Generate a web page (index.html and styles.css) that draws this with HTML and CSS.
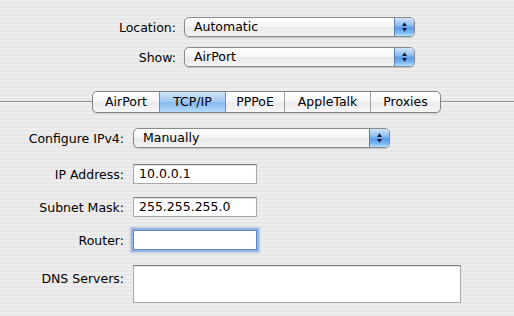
FILE: index.html
```html
<!DOCTYPE html>
<html>
<head>
<meta charset="utf-8">
<link rel="stylesheet" href="styles.css">
</head>
<body>
<div class="window">
  <div class="top">
    <label class="lbl">Location:</label>
    <div class="popup wide"><span class="val">Automatic</span><span class="arrows"><svg width="20" height="18" viewBox="0 0 20 18"><path d="M10 4 L12.6 8 H7.4 Z M10 14 L12.6 10 H7.4 Z" fill="#0b1a3a"/></svg></span></div>
    <label class="lbl">Show:</label>
    <div class="popup wide"><span class="val">AirPort</span><span class="arrows"><svg width="20" height="18" viewBox="0 0 20 18"><path d="M10 4 L12.6 8 H7.4 Z M10 14 L12.6 10 H7.4 Z" fill="#0b1a3a"/></svg></span></div>
  </div>

  <div class="tabrow">
    <div class="seg">
      <span class="tab t1">AirPort</span>
      <span class="tab t2 sel">TCP/IP</span>
      <span class="tab t3">PPPoE</span>
      <span class="tab t4">AppleTalk</span>
      <span class="tab t5">Proxies</span>
    </div>
  </div>

  <div class="form">
    <label class="lbl">Configure IPv4:</label>
    <div class="popup cfg"><span class="val">Manually</span><span class="arrows"><svg width="20" height="18" viewBox="0 0 20 18"><path d="M10 4 L12.6 8 H7.4 Z M10 14 L12.6 10 H7.4 Z" fill="#0b1a3a"/></svg></span></div>

    <label class="lbl r-ip">IP Address:</label>
    <div class="field r-ip">10.0.0.1</div>

    <label class="lbl">Subnet Mask:</label>
    <div class="field">255.255.255.0</div>

    <label class="lbl">Router:</label>
    <div class="field focus"></div>

    <label class="lbl r-dns top-al">DNS Servers:</label>
    <div class="box r-dns"></div>
  </div>
</div>
</body>
</html>
```

FILE: styles.css
```css
* { box-sizing: border-box; }
html, body {
  margin: 0;
  padding: 0;
  width: 514px;
  height: 316px;
  overflow: hidden;
}
body {
  font-family: "DejaVu Sans", "Noto Sans", sans-serif;
  font-size: 12.5px;
  color: #000;
  background: repeating-linear-gradient(to bottom, #ededed 0px, #ededed 2px, #e7e7e7 2px, #e7e7e7 4px);
}
.window {
  height: 316px;
}
.top {
  padding-top: 17px;
  display: grid;
  grid-template-columns: 176px 231px;
  column-gap: 8px;
  row-gap: 10px;
  align-items: center;
}
.lbl {
  text-align: right;
  white-space: nowrap;
}
.popup {
  height: 20px;
  border: 1px solid #8a8a8a;
  border-radius: 5px;
  background: linear-gradient(to bottom, #ffffff 0%, #f6f6f6 45%, #e9e9e9 55%, #f4f4f4 100%);
  box-shadow: 0 1px 1px rgba(0,0,0,0.18);
  display: flex;
  overflow: hidden;
}
.popup .val {
  flex: 1;
  padding-left: 9px;
  line-height: 18px;
}
.popup .arrows {
  width: 20px;
  border-left: 1px solid #5a7fb3;
  background: linear-gradient(to bottom, #d3e6fb 0%, #8dbdf1 40%, #5c9be6 55%, #79b6f5 80%, #b5e2fd 100%);
  display: flex;
}
.popup .arrows svg { display: block; }
.tabrow {
  margin-top: 24px;
  height: 22px;
  padding-left: 92px;
  background: linear-gradient(to bottom, transparent 0, transparent 10px, #8f8f8f 10px, #8f8f8f 11px, #fafafa 11px, #fafafa 12px, transparent 12px);
}
.seg {
  display: inline-flex;
  height: 22px;
  border: 1px solid #848484;
  border-radius: 5px;
  overflow: hidden;
  background: linear-gradient(to bottom, #ffffff 0%, #f7f7f7 45%, #ebebeb 55%, #f7f7f7 100%);
  box-shadow: 0 1px 1px rgba(0,0,0,0.15);
}
.tab {
  display: block;
  text-align: center;
  line-height: 20px;
  border-left: 1px solid #a3a3a3;
}
.t1 { width: 66px; border-left: none; }
.t2 { width: 67px; }
.t3 { width: 58px; }
.t4 { width: 86px; }
.t5 { width: 70px; }
.tab.sel {
  background: linear-gradient(to bottom, #cfe3f8 0%, #a6cbf1 45%, #88b9ee 55%, #b3dafa 100%);
  border-left-color: #6d8fbf;
  border-right: 1px solid #6d8fbf;
}
.tab.sel + .tab { border-left: none; }
.form {
  margin-top: 15px;
  display: grid;
  grid-template-columns: 124px auto;
  column-gap: 9px;
  row-gap: 13px;
  align-items: center;
  justify-content: start;
}
.cfg { width: 257px; }
.r-ip { margin-top: 3px; }
.r-dns { margin-top: 2px; }
.field {
  width: 124px;
  height: 20px;
  background: #fff;
  border: 1px solid #a8a8a8;
  border-top-color: #7c7c7c;
  box-shadow: inset 0 1px 1px rgba(0,0,0,0.12);
  padding-left: 5px;
  line-height: 18px;
}
.field.focus {
  border-color: #5f86bf;
  box-shadow: 0 0 0 2px #92b6df, 0 0 2px 3px rgba(130,165,210,0.45);
}
.box {
  width: 328px;
  height: 38px;
  background: #fff;
  border: 1px solid #a8a8a8;
  border-top-color: #7c7c7c;
  box-shadow: inset 0 1px 1px rgba(0,0,0,0.12);
}
.top-al {
  align-self: start;
  padding-top: 6px;
}
```
